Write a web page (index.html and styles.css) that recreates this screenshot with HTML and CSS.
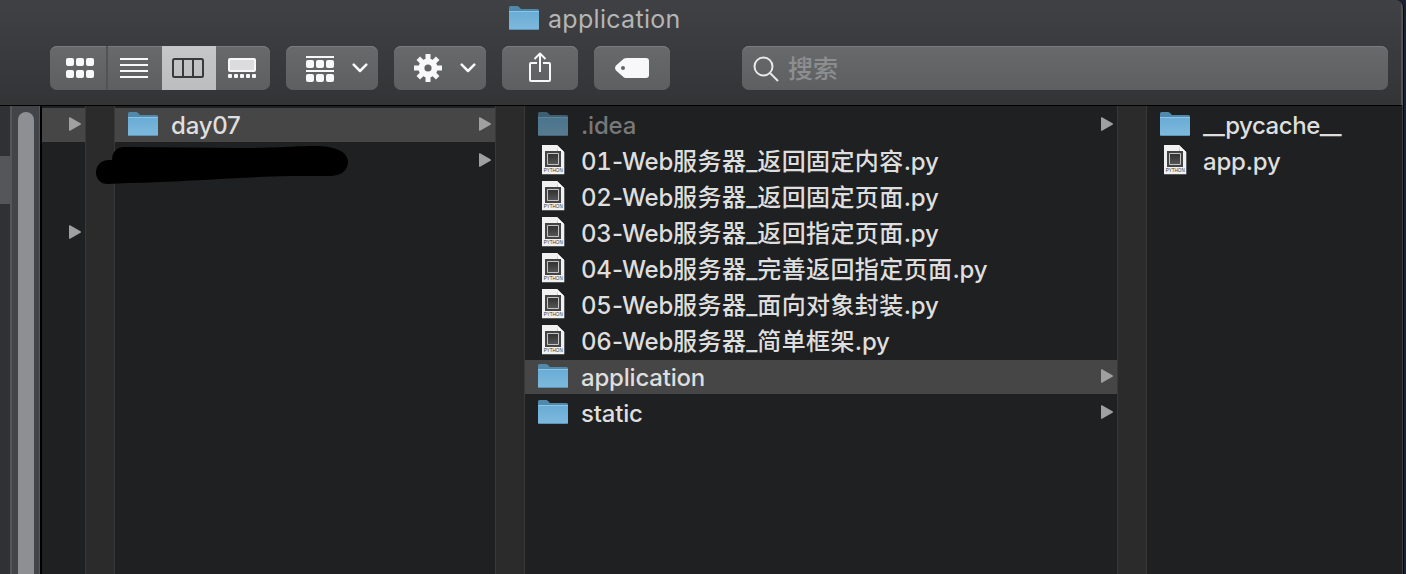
FILE: index.html
```html
<!DOCTYPE html>
<html lang="zh-CN">
<head>
<meta charset="utf-8">
<title>application</title>
<link rel="stylesheet" href="styles.css">
</head>
<body>
<svg class="defs" width="0" height="0">
  <defs>
    <linearGradient id="blue" x1="0" y1="0" x2="0" y2="1"><stop offset="0" stop-color="#68acd6"/><stop offset="1" stop-color="#7fb9dc"/></linearGradient>
    <linearGradient id="chip" x1="0" y1="0" x2="0" y2="1"><stop offset="0" stop-color="#303030"/><stop offset="1" stop-color="#555"/></linearGradient>
    <symbol id="folder" viewBox="0 0 30 24">
      <path d="M0 5V1.5Q0 0 1.5 0H8Q9 0 10 1L12 3H28.5Q30 3 30 4.5V6H0z" fill="#5189aa"/>
      <path d="M0 5H30V22.5Q30 24 28.5 24H1.5Q0 24 0 22.5z" fill="url(#blue)"/>
      <path d="M0 5.5H30" stroke="#8cc5e5"/>
      <path d="M.7 23.6H29.3" stroke="#4e87a9" stroke-width=".8"/>
    </symbol>
    <symbol id="python" viewBox="0 0 24 30">
      <path d="M1 0H16L23.300 7.300V29.200H1z" fill="#f1f1f1"/>
      <path d="M16 0L23.300 7.300H16z" fill="#fff"/>
      <path d="M16 0V7.300H23L17 6.500z" fill="#bcbcbc"/>
      <path d="M4 6H20V22H4z" fill="#444"/>
      <path d="M6.500 8.500H17.500V19.500H6.500z" fill="url(#chip)" stroke="#c4c4c4"/>
      <text x="12.200" y="27.400" text-anchor="middle" textLength="19" lengthAdjust="spacingAndGlyphs" class="badge">PYTHON</text>
    </symbol>
    <symbol id="arrow" viewBox="0 0 12 14"><path d="M0 .8Q0-.2 1 .3L11.500 6.200Q12.500 7 11.500 7.800L1 13.700Q0 14.200 0 13.200z" fill="currentColor"/></symbol>
    <symbol id="chevron" viewBox="0 0 16 10"><path d="M1.700 1.700L8 8L14.300 1.700" fill="none" stroke="#f8f8fa" stroke-width="2.500" stroke-linecap="round" stroke-linejoin="round"/></symbol>
  </defs>
</svg>
<div class="window">
  <header class="header">
    <div class="title"><svg class="folder"><use href="#folder"/></svg><span>application</span></div>
    <div class="toolbar">
      <div class="views">
        <div class="seg"><svg width="28" height="20" fill="#f8f8fa"><rect width="8" height="8" rx="2"/><rect x="10" width="8" height="8" rx="2"/><rect x="20" width="8" height="8" rx="2"/><rect y="12" width="8" height="8" rx="2"/><rect x="10" y="12" width="8" height="8" rx="2"/><rect x="20" y="12" width="8" height="8" rx="2"/></svg></div>
        <div class="seg"><svg width="28" height="20"><path d="M0 1H28M0 7H28M0 13H28M0 19H28" stroke="#f8f8fa" stroke-width="2"/></svg></div>
        <div class="seg active"><svg width="32" height="20"><rect x="1" y="1" width="30" height="18" rx="1.500" fill="none" stroke="#3a3a3d" stroke-width="2"/><path d="M11 1V19M21 1V19" stroke="#3a3a3d" stroke-width="2"/></svg></div>
        <div class="seg"><svg width="28" height="20" fill="#f8f8fa"><rect x="1" y="1" width="26" height="12" rx="1" fill="#dcdcde" stroke="#f8f8fa" stroke-width="2"/><rect y="16" width="4" height="4" rx="1"/><rect x="6" y="16" width="4" height="4" rx="1"/><rect x="12" y="16" width="4" height="4" rx="1"/><rect x="18" y="16" width="4" height="4" rx="1"/><rect x="24" y="16" width="4" height="4" rx="1"/></svg></div>
      </div>
      <div class="button menu">
        <svg class="group" width="28" height="26" fill="#f8f8fa"><path d="M0 0H28V2H0zM0 14H28V16H0z"/><rect y="4" width="8" height="8" rx="2"/><rect x="10" y="4" width="8" height="8" rx="2"/><rect x="20" y="4" width="8" height="8" rx="2"/><rect y="18" width="8" height="8" rx="2"/><rect x="10" y="18" width="8" height="8" rx="2"/><rect x="20" y="18" width="8" height="8" rx="2"/></svg>
        <svg class="chevron"><use href="#chevron"/></svg>
      </div>
      <div class="button menu">
        <svg width="28" height="28" viewBox="-14 -14 28 28"><g stroke="#f8f8fa" stroke-width="5"><path d="M0-14V-5M0 14V5M-14 0H-5M14 0H5M-9.700-9.700L-4-4M9.700 9.700L4 4M9.700-9.700L4-4M-9.700 9.700L-4 4"/><circle r="6.600" fill="none" stroke-width="6"/></g></svg>
        <svg class="chevron"><use href="#chevron"/></svg>
      </div>
      <div class="button"><svg class="share" width="24" height="32" fill="none" stroke="#f8f8fa" stroke-width="2"><path d="M9 12H3Q2 12 2 13V29Q2 30 3 30H21Q22 30 22 29V13Q22 12 21 12H15M12 21V3M6.500 8L12 2.500L17.500 8" stroke-linejoin="round"/></svg></div>
      <div class="button"><svg width="34" height="20"><path fill-rule="evenodd" d="M9 0.600Q10 0 12 0H31Q34 0 34 3V17Q34 20 31 20H12Q10 20 9 19.400L1 12.500Q-.9 10 1 7.500zM8 8A2 2 0 1 0 8 12A2 2 0 1 0 8 8z" fill="#f8f8fa"/></svg></div>
      <div class="search"><svg width="26" height="26" fill="none" stroke="#e9e9ea" stroke-width="2"><circle cx="10.500" cy="10.500" r="9"/><path d="M17 17L25 25"/></svg><span>搜索</span></div>
    </div>
  </header>
  <main class="browser">
    <aside class="sidebar"></aside>
    <div class="track"><div class="thumb"></div></div>
    <section class="column parent">
      <div class="row selected"><svg class="arrow"><use href="#arrow"/></svg></div>
      <div class="row"></div><div class="row"></div>
      <div class="row"><svg class="arrow"><use href="#arrow"/></svg></div>
    </section>
    <div class="divider"></div>
    <section class="column days">
      <div class="row selected"><svg class="folder"><use href="#folder"/></svg><span class="name">day07</span><svg class="arrow"><use href="#arrow"/></svg></div>
      <div class="row"><svg class="arrow"><use href="#arrow"/></svg></div>
      <svg class="scribble" width="254" height="40" viewBox="95 145 254 40"><path d="M112 160C112 151 118 147 124 147L240 148C280 148 294 146 315 146C334 146 348 151 348 162C348 171 340 176 330 176L290 176C240 177 180 182 128 183L108 184C92 184 92 161 108 160z"/></svg>
    </section>
    <div class="divider"></div>
    <section class="column files">
      <div class="row dim"><svg class="folder"><use href="#folder"/></svg><span class="name">.idea</span><svg class="arrow"><use href="#arrow"/></svg></div>
      <div class="row"><svg class="python"><use href="#python"/></svg><span class="name"><i>01</i>-Web<b>服务器</b>_<b>返回固定内容</b>.py</span></div>
      <div class="row"><svg class="python"><use href="#python"/></svg><span class="name"><i>02</i>-Web<b>服务器</b>_<b>返回固定页面</b>.py</span></div>
      <div class="row"><svg class="python"><use href="#python"/></svg><span class="name"><i>03</i>-Web<b>服务器</b>_<b>返回指定页面</b>.py</span></div>
      <div class="row"><svg class="python"><use href="#python"/></svg><span class="name"><i>04</i>-Web<b>服务器</b>_<b>完善返回指定页面</b>.py</span></div>
      <div class="row"><svg class="python"><use href="#python"/></svg><span class="name"><i>05</i>-Web<b>服务器</b>_<b>面向对象封装</b>.py</span></div>
      <div class="row"><svg class="python"><use href="#python"/></svg><span class="name"><i>06</i>-Web<b>服务器</b>_<b>简单框架</b>.py</span></div>
      <div class="row selected"><svg class="folder"><use href="#folder"/></svg><span class="name">application</span><svg class="arrow"><use href="#arrow"/></svg></div>
      <div class="row"><svg class="folder"><use href="#folder"/></svg><span class="name">static</span><svg class="arrow"><use href="#arrow"/></svg></div>
    </section>
    <div class="divider"></div>
    <section class="column app">
      <div class="row"><svg class="folder"><use href="#folder"/></svg><span class="name cache">__pycache__</span></div>
      <div class="row"><svg class="python"><use href="#python"/></svg><span class="name">app.py</span></div>
    </section>
  </main>
</div>
</body>
</html>
```
FILE: styles.css
```css
* { box-sizing: border-box; }
body {
  margin: 0;
  width: 1406px;
  height: 574px;
  overflow: hidden;
  background: #192334;
  font-family: Inter, "Noto Sans CJK SC", sans-serif;
}
svg { display: block; flex: none; }
.defs { position: absolute; }
.window {
  width: 1404px;
  height: 574px;
  display: flex;
  flex-direction: column;
  border-right: 1px solid #08090a;
  border-radius: 0 8px 0 0;
  overflow: hidden;
  background: #1f2021;
}
.header {
  height: 106px;
  flex: none;
  background: linear-gradient(#404144, #333436);
  border-bottom: 1px solid #000;
  border-right: 2px solid #525355;
}
.title {
  display: flex;
  height: 46px;
  padding: 6px 0 0 509px;
  gap: 9px;
  color: #b4b5b6;
  font-size: 25px;
  letter-spacing: .3px;
  line-height: 26px;
}
.folder { width: 30px; height: 24px; }
.toolbar { display: flex; padding-left: 50px; gap: 16px; }
.views, .button, .search {
  height: 44px;
  border-radius: 7px;
  background: linear-gradient(#68696b, #5e5f61);
  box-shadow: inset 0 1px #7b7c7e;
  display: flex;
  align-items: center;
}
.views { width: 220px; overflow: hidden; }
.seg { width: 54px; height: 44px; display: flex; align-items: center; justify-content: center; padding-right: 2px; }
.seg:first-child { width: 58px; border-right: 2px solid #525355; padding: 0 0 0 3px; }
.seg.active { background: linear-gradient(#c6c7c9, #bcbdbf); }
.button { width: 76px; justify-content: center; }
.button.menu { width: 92px; justify-content: space-between; padding: 0 10px 0 20px; }
.group { margin-top: 2px; }
.chevron { width: 16px; height: 10px; }
.share { margin-top: -3px; }
.search {
  width: 646px;
  margin-left: 56px;
  padding-left: 11px;
  gap: 9px;
  color: #8d8e90;
  font-size: 25px;
}
.search svg { margin-top: 1px; }
.search span { margin-top: -2px; font-family: "Noto Sans CJK SC", sans-serif; font-weight: 500; }
.browser { flex: 1; display: flex; border-right: 1px solid #3b3c3d; }
.sidebar { width: 10px; background: linear-gradient(#303135 50px, #54565a 50px 98px, #303135 98px); }
.track {
  width: 30px;
  padding: 6px 5px 0 6px;
  border-left: 2px solid #54565a;
  border-right: 1px solid #56585c;
  background: #424449;
}
.thumb { width: 16px; height: 100%; border-radius: 8px 8px 0 0; background: #8e8f93; }
.column { padding-top: 2px; position: relative; }
.parent { width: 45px; border-left: 2px solid #000; }
.days { width: 380px; }
.files { width: 592px; }
.app { width: 254px; }
.divider { width: 30px; background: #2b2b2b; border: 1px solid #393939; border-width: 0 1px; }
.row {
  height: 34px;
  margin-bottom: 2px;
  padding: 0 4px 0 13px;
  display: flex;
  align-items: center;
  color: #dedede;
}
.row.selected { background: #464646; }
.row .folder { margin-top: -2px; }
.python { width: 24px; height: 30px; margin: -2px 3px 0; }
.badge { font: 5.800px "Liberation Sans", sans-serif; fill: #333; }
.name { margin: 2px 0 0 13px; font-size: 24px; font-weight: 500; line-height: 34px; letter-spacing: -.2px; white-space: nowrap; }
.name i { display: inline-block; width: 31px; font-style: normal; font-variant-numeric: tabular-nums; letter-spacing: -.35px; }
.name b { font-weight: 500; font-size: 24px; letter-spacing: .4px; }
.cache { letter-spacing: -.45px; }
.arrow { width: 12px; height: 14px; margin: -2px 0 0 auto; color: #a0a0a0; }
.dim .folder { opacity: .6; }
.dim .name { color: #77787a; }
.scribble { position: absolute; left: -20px; top: 39px; z-index: 1; }
```
